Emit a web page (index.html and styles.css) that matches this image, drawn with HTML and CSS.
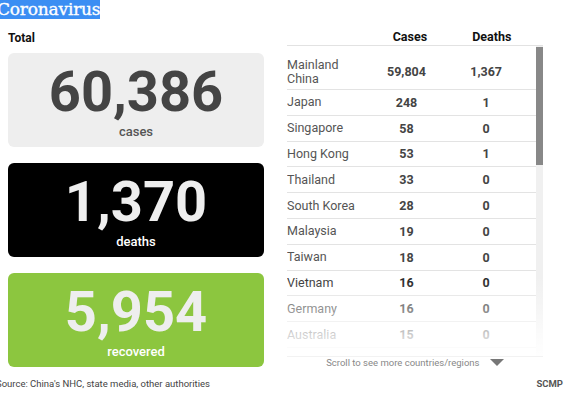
FILE: index.html
```html
<!DOCTYPE html>
<html>
<head>
<meta charset="utf-8">
<link rel="stylesheet" href="styles.css">
</head>
<body>
<h1 class="title"><span class="title-text">Coronavirus</span></h1>
<div class="main">
  <div class="totals">
    <div class="totals-head">Total</div>
    <div class="card card-cases">
      <div class="card-num">60,386</div>
      <div class="card-label">cases</div>
    </div>
    <div class="card card-deaths">
      <div class="card-num">1,370</div>
      <div class="card-label">deaths</div>
    </div>
    <div class="card card-recovered">
      <div class="card-num">5,954</div>
      <div class="card-label">recovered</div>
    </div>
  </div>
  <div class="panel">
    <div class="thead">
      <div></div>
      <div class="th">Cases</div>
      <div class="th">Deaths</div>
    </div>
    <div class="viewport">
      <div class="rows">
        <div class="row row-first"><div class="country">Mainland<br>China</div><div class="num">59,804</div><div class="num">1,367</div></div>
        <div class="row"><div class="country">Japan</div><div class="num">248</div><div class="num">1</div></div>
        <div class="row"><div class="country">Singapore</div><div class="num">58</div><div class="num">0</div></div>
        <div class="row"><div class="country">Hong Kong</div><div class="num">53</div><div class="num">1</div></div>
        <div class="row"><div class="country">Thailand</div><div class="num">33</div><div class="num">0</div></div>
        <div class="row"><div class="country">South Korea</div><div class="num">28</div><div class="num">0</div></div>
        <div class="row"><div class="country">Malaysia</div><div class="num">19</div><div class="num">0</div></div>
        <div class="row"><div class="country">Taiwan</div><div class="num">18</div><div class="num">0</div></div>
        <div class="row row-hover"><div class="country">Vietnam</div><div class="num">16</div><div class="num">0</div></div>
        <div class="row"><div class="country">Germany</div><div class="num">16</div><div class="num">0</div></div>
        <div class="row"><div class="country">Australia</div><div class="num">15</div><div class="num">0</div></div>
      </div>
      <div class="scrollbar"><div class="thumb"></div></div>
      <div class="fade"></div>
    </div>
    <div class="hint">Scroll to see more countries/regions <span class="tri"></span></div>
  </div>
</div>
<div class="footer">
  <div class="source">Source: China's NHC, state media, other authorities</div>
  <div class="brand">SCMP</div>
</div>
</body>
</html>
```
FILE: styles.css
```css
html, body {
  margin: 0;
  padding: 0;
  background: #fff;
}
body {
  width: 570px;
  height: 400px;
  overflow: hidden;
  font-family: Roboto, "Liberation Sans", sans-serif;
  color: #333;
}
.title {
  margin: 0 0 0 -3px;
  height: 18px;
  line-height: 18px;
  font-family: "DejaVu Serif", "Liberation Serif", serif;
  font-weight: normal;
  font-size: 17px;
  letter-spacing: -0.2px;
}
.title-text {
  background: #3b8ef3;
  color: #fff;
  -webkit-text-stroke: 0.35px #fff;
}
.main {
  display: flex;
  gap: 23px;
  padding-left: 8px;
}
.totals {
  width: 256px;
  display: flex;
  flex-direction: column;
  gap: 16px;
}
.totals-head {
  padding-top: 13px;
  line-height: 14px;
  height: 14px;
  margin-bottom: -8px;
  font-size: 12px;
  font-weight: 700;
  color: #111;
}
.card {
  height: 94px;
  box-sizing: border-box;
  border-radius: 6px;
  padding-top: 14px;
  text-align: center;
}
.card-num {
  font-size: 56px;
  line-height: 50px;
  font-weight: 700;
}
.card-label {
  margin-top: 8px;
  font-size: 13px;
  line-height: 14px;
  font-weight: 500;
}
.card-cases { background: #eeeeee; }
.card-cases .card-num { color: #444; }
.card-cases .card-label { color: #555; }
.card-deaths { background: #000; }
.card-deaths .card-num { color: #eee; }
.card-deaths .card-label { color: #fff; }
.card-recovered { background: #8cc63f; }
.card-recovered .card-num { color: #eee; }
.card-recovered .card-label { color: #fff; }

.panel {
  width: 256px;
  display: flex;
  flex-direction: column;
}
.thead {
  display: grid;
  grid-template-columns: 36% 24% 40%;
  padding-top: 12px;
  padding-bottom: 1px;
  border-bottom: 1px solid #e2e2e2;
}
.th {
  text-align: center;
  font-size: 12.5px;
  line-height: 14px;
  font-weight: 700;
  color: #111;
}
.viewport {
  position: relative;
  display: flex;
  height: 310px;
  overflow: hidden;
  border-bottom: 1px solid #f2f2f2;
}
.rows {
  flex: 1;
}
.row {
  display: grid;
  grid-template-columns: 36% 24% 40%;
  align-items: center;
  height: 25.8px;
  box-sizing: border-box;
  border-bottom: 1px solid #e3e3e3;
  font-size: 12.5px;
}
.row-first {
  height: 44px;
  padding-top: 8px;
}
.country {
  color: #555;
  line-height: 14px;
}
.num {
  text-align: center;
  font-weight: 700;
  color: #444;
}
.row-hover .country { color: #333; }
.row-hover .num { color: #222; }
.scrollbar {
  width: 7px;
  background: #f0f0f0;
  padding-top: 1px;
}
.thumb {
  height: 118px;
  background: #888;
}
.fade {
  position: absolute;
  left: 0;
  right: 0;
  bottom: 0;
  height: 80px;
  background: linear-gradient(to bottom, rgba(255,255,255,0) 0%, rgba(255,255,255,0.35) 40%, rgba(255,255,255,0.75) 75%, rgba(255,255,255,0.95) 100%);
}
.hint {
  text-align: center;
  font-size: 9.5px;
  line-height: 12px;
  color: #888;
  margin-top: 0;
}
.tri {
  display: inline-block;
  width: 0;
  height: 0;
  border-left: 7px solid transparent;
  border-right: 7px solid transparent;
  border-top: 7px solid #777;
  margin-left: 8px;
  vertical-align: 0;
}
.footer {
  display: flex;
  justify-content: space-between;
  align-items: center;
  margin-top: 8px;
  padding-right: 7px;
}
.source {
  margin-left: -4px;
  font-size: 9.5px;
  line-height: 14px;
  color: #444;
}
.brand {
  font-size: 9.5px;
  line-height: 14px;
  font-weight: 700;
  color: #555;
}
```
